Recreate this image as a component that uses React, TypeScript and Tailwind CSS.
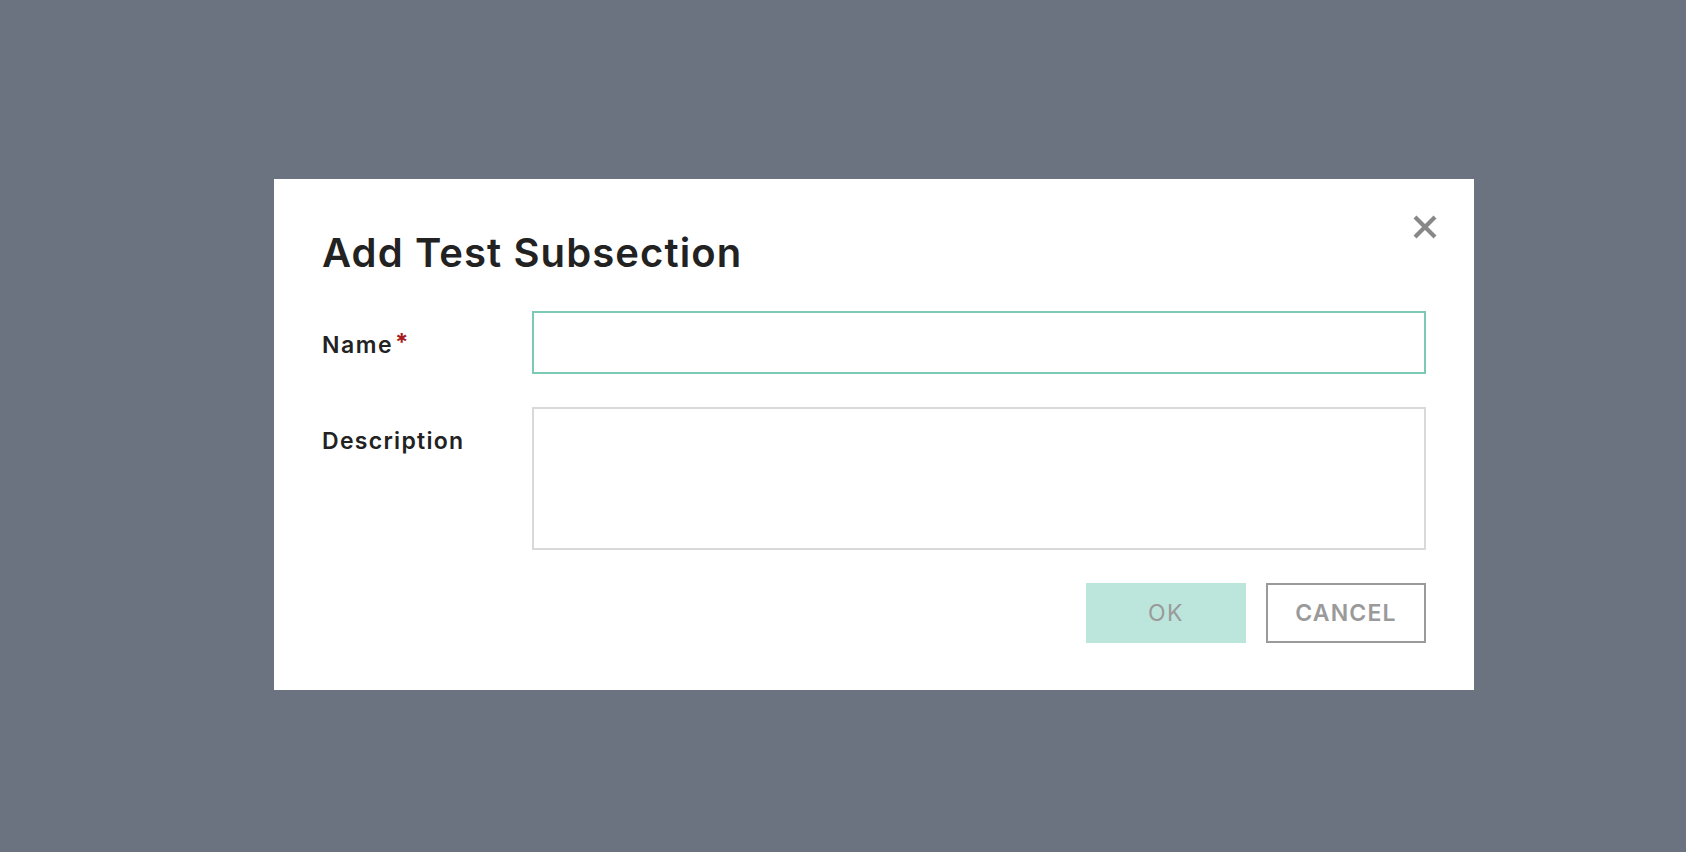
import React from "react";

export default function App() {
  return (
    <div className="min-h-[852px] w-full bg-[#6b7280] pt-[179px] pl-[274px]" style={{ fontFamily: "Inter, 'Noto Sans', sans-serif" }}>
      <div className="relative w-[1200px] bg-white px-[48px] pt-[50px] pb-[47px]">
        <button className="absolute right-[37px] top-[36px] flex h-[24px] w-[24px] items-center justify-center" aria-label="Close">
          <svg width="24" height="24" viewBox="0 0 24 24">
            <path d="M2 2 L22 22 M22 2 L2 22" stroke="#888888" strokeWidth="4.2" strokeLinecap="butt" />
          </svg>
        </button>
        <h2 className="text-[40px] font-semibold leading-[48px] tracking-[1.1px] text-[#222222]">Add Test Subsection</h2>
        <div className="mt-[34px] flex items-start">
          <label className="w-[210px] shrink-0 pt-[23px] text-[23px] font-semibold leading-[22px] tracking-[1.5px] text-[#222222]">
            Name<span className="ml-[2px] align-top text-[24px] font-bold leading-[18px] text-[#a51c1c]">*</span>
          </label>
          <input className="h-[63px] flex-1 border-2 border-[#7ccab5] bg-white px-4 text-[20px] outline-none" />
        </div>
        <div className="mt-[33px] flex items-start">
          <label className="w-[210px] shrink-0 pt-[23px] text-[23px] font-semibold leading-[22px] tracking-[1.3px] text-[#222222]">Description</label>
          <textarea className="h-[143px] flex-1 resize-none border-2 border-[#d9d9d9] bg-white px-4 py-3 text-[20px] outline-none" />
        </div>
        <div className="mt-[33px] flex justify-end gap-[20px]">
          <button className="flex h-[60px] w-[160px] items-center justify-center bg-[#bce5dc] text-[23px] font-normal tracking-[1.5px] text-[#9a9a9a]">OK</button>
          <button className="flex h-[60px] w-[160px] items-center justify-center border-2 border-[#9a9a9a] bg-white text-[23px] font-semibold tracking-[1.2px] text-[#9a9a9a]">CANCEL</button>
        </div>
      </div>
    </div>
  );
}
